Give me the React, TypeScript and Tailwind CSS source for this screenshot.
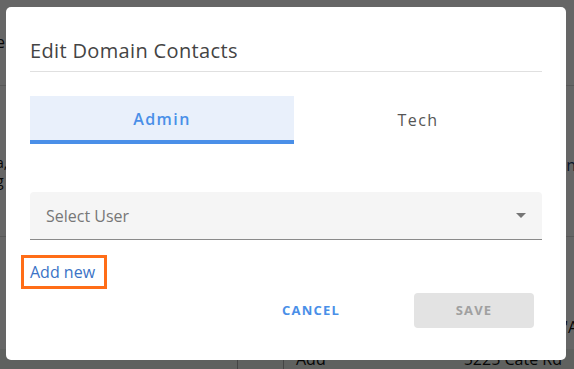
import React from "react";

export default function App() {
  return (
    <div className="relative w-[574px] h-[369px] overflow-hidden bg-white font-['Open_Sans',sans-serif]">
      {/* Background page (dimmed by overlay) */}
      <div className="flex flex-col w-full h-full text-[16px] text-[#111]">
        <div className="h-[89px] border-b border-[#dcdcdc] flex items-start pt-[30px]">
          <span className="-ml-[4px]">e</span>
        </div>
        <div className="h-[156px] flex justify-between pt-[68px]">
          <div className="-ml-[4px] flex flex-col gap-[1px] text-[14px] leading-[17px]">
            <span>a,</span>
            <span>g</span>
          </div>
          <span className="mr-[-2px] mt-[2px] text-[#1b3d6e] leading-[18px]">tion</span>
        </div>
        <div className="h-[115px] border-t border-[#dcdcdc] flex justify-end pt-[78px]">
          <span className="mr-[-4px]">'A</span>
        </div>
        <div className="flex-1 bg-[#eef3ee] flex">
          <div className="w-[238px] border-r border-[#aaa]" />
          <div className="w-[46px] border-r border-[#aaa]" />
          <div className="pl-[12px] leading-[20px]">Add</div>
          <div className="pl-[138px] leading-[20px]">5225 Cate Rd</div>
        </div>
      </div>

      {/* Overlay + dialog */}
      <div className="absolute inset-0 bg-black/60 pl-[6px] pt-[7px]">
        <div className="w-[560px] h-[353px] bg-white rounded-[5px] px-[24px] pt-[31px] flex flex-col">
          <div className="text-[20px] leading-[26px] text-[#444] font-medium tracking-[0.35px]">
            Edit Domain Contacts
          </div>
          <div className="mt-[7px] h-px bg-[#e0e0e0]" />

          <div className="mt-[24px] flex h-[48px]">
            <div className="w-[264px] bg-[#e9f0fb] border-b-[4px] border-[#4a8fe8] flex items-center justify-center pt-[2px] text-[16px] font-semibold text-[#4a8fe8] tracking-[1.4px]">
              Admin
            </div>
            <div className="flex-1 flex items-center justify-center text-[16px] text-[#555] tracking-[1.4px]">
              Tech
            </div>
          </div>

          <div className="mt-[48px] h-[48px] bg-[#f5f5f5] rounded-t-[4px] border-b border-[#8a8a8a] flex items-center justify-between pl-[16px] pr-[16px]">
            <span className="text-[16px] text-[#777]">Select User</span>
            <svg width="10" height="5" viewBox="0 0 10 5">
              <path d="M0 0 L10 0 L5 5 Z" fill="#757575" />
            </svg>
          </div>

          <div className="mt-[15px]">
            <span className="inline-block -ml-[9px] border-[3px] border-[#ff6d17] pl-[6px] pr-[9px] py-[2px] text-[16px] leading-[24px] text-[#3b73c6]">
              Add new
            </span>
          </div>

          <div className="mt-[4px] flex justify-end items-center pr-[8px]">
            <button className="px-[16px] h-[35px] text-[13px] font-bold tracking-[1.2px] text-[#4a8fe8] mr-[58px]">
              CANCEL
            </button>
            <button className="w-[120px] h-[35px] rounded-[4px] bg-[#e3e3e3] text-[13px] font-bold tracking-[1.2px] text-[#a0a0a0]">
              SAVE
            </button>
          </div>
        </div>
      </div>
    </div>
  );
}
